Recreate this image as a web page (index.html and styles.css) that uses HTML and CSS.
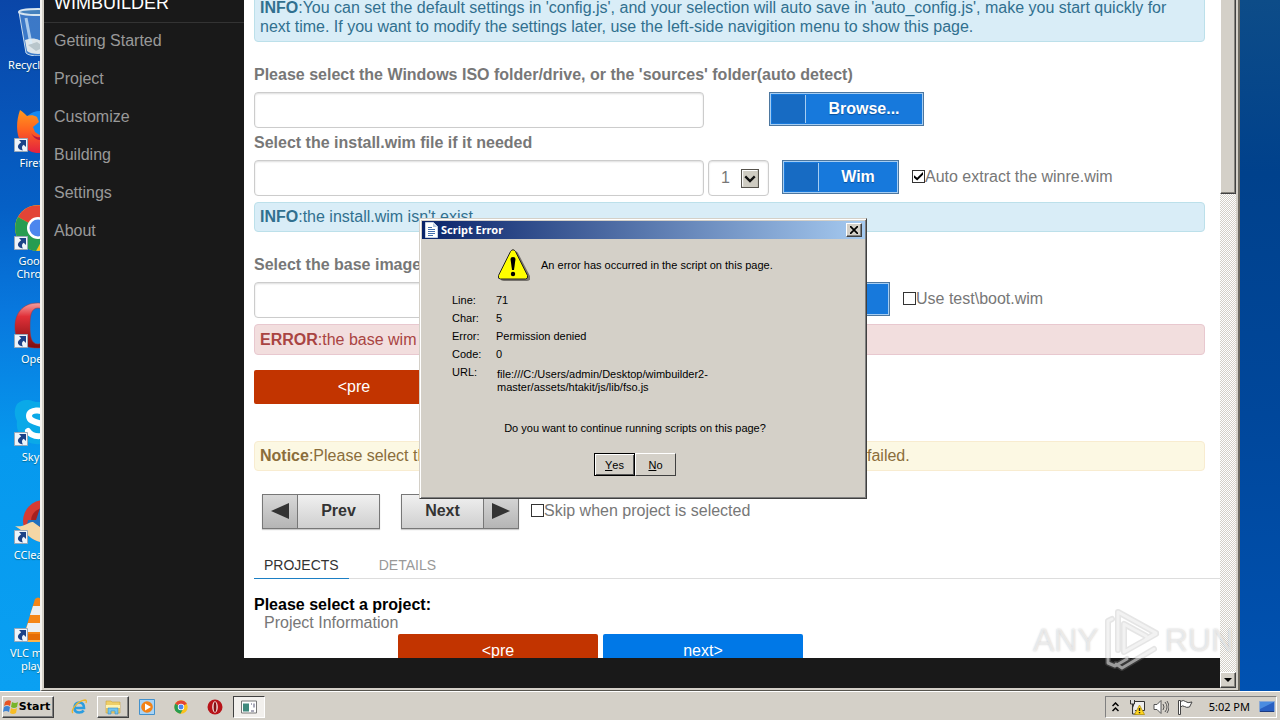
FILE: index.html
```html
<!DOCTYPE html>
<html lang="en">
<head>
<meta charset="utf-8">
<title>WimBuilder</title>
<link rel="stylesheet" href="styles.css">
</head>
<body>
<svg class="defs" aria-hidden="true">
  <defs>
    <linearGradient id="operaRed" x1="0" y1="0" x2="0" y2="1"><stop offset="0" stop-color="#f4a0a0"/><stop offset=".3" stop-color="#e03038"/><stop offset="1" stop-color="#7c0d10"/></linearGradient>
    <linearGradient id="foxOrange" x1="0" y1="0" x2="0" y2="1"><stop offset="0" stop-color="#ff9a1e"/><stop offset=".45" stop-color="#ff6420"/><stop offset="1" stop-color="#e3213f"/></linearGradient>
    <symbol id="shortcut" viewBox="0 0 14 14"><path fill="#eef4fa" stroke="#9aa8b8" d="M.5.5h13v13H.5z"/><path fill="#1b4288" d="M5 2h7v7L9.700 6.700C7.800 8 7.500 9.500 8.800 12.500 4 12 1.500 8 7.200 4.300z"/></symbol>
    <symbol id="chrome" viewBox="0 0 48 48"><circle cx="24" cy="24" r="23" fill="#fbc21c"/><path fill="#e24436" d="M24 24 4 13a23 23 0 0 1 40 0z"/><path fill="#279c51" d="M4 13a23 23 0 0 0 18 34l10-18-8-5z"/><circle cx="24" cy="24" r="11" fill="#fff"/><circle cx="24" cy="24" r="8.500" fill="#4c86ee"/></symbol>
  </defs>
</svg>

<main class="desktop">
  <ul class="shortcuts">
    <li><span class="pic"><svg viewBox="0 0 48 48"><path fill="#7cb4e8" fill-opacity=".45" stroke="#c8dced" d="m5 4 7 41c4 4 20 4 24 0l7-41z"/><path fill="#dfe6ea" d="m11 32 2 11c4 4 18 4 22 0l2-11c-5-4-8 2-12 0s-9-2-14 0z"/><path fill="#b9c6cc" d="m14 37 9-3 7 5-8 4z"/><ellipse cx="24" cy="4" rx="19" ry="3" fill="#4581bd" stroke="#d7e5f0" stroke-width="2"/><path stroke="#d9ecfb" stroke-opacity=".7" stroke-width="3" d="m12 10 5 26"/></svg></span>Recycle Bin</li>
    <li><span class="pic"><svg viewBox="0 0 48 48"><circle cx="26" cy="23" r="18" fill="#1688ef"/><path fill="url(#foxOrange)" d="M6 4c3 2 5 4 7 6 3-1 7-1 10 1l2 5-6 5 2 5 6 4 9-4c0 7-6 9-11 7 10 9 22-3 18-18 8 15-1 32-18 32C7 47-2 27 6 4z"/><path fill="#b51640" d="M16 24c2 8 10 9 17 5-2 7-13 8-17-5z"/></svg><svg class="mark"><use href="#shortcut"/></svg></span>Firefox</li>
    <li><span class="pic"><svg><use href="#chrome"/></svg><svg class="mark"><use href="#shortcut"/></svg></span>Google Chrome</li>
    <li><span class="pic"><svg viewBox="0 0 48 48"><path fill="url(#operaRed)" stroke="#a33" stroke-width=".5" fill-rule="evenodd" d="M24 1C8 1 1 12 1 25s6 21 23 21 23-8 23-21S40 1 24 1zm0 5c7 0 8 8 8 18s-1 18-8 18-8-8-8-18 1-18 8-18z"/></svg><svg class="mark"><use href="#shortcut"/></svg></span>Opera</li>
    <li><span class="pic"><svg viewBox="0 0 48 48"><path fill="#0aa9e8" d="M3 4c8-7 15-3 19-2 16-1 27 12 24 27 3 14-9 20-19 15C12 46 1 34 3 21c-3-6-3-12 0-17z"/><path fill="none" stroke="#fff" stroke-width="6" stroke-linecap="round" d="M33 14c-5-5-18-5-18 2 0 9 19 5 19 14 0 8-16 8-20 1"/></svg><svg class="mark"><use href="#shortcut"/></svg></span>Skype</li>
    <li><span class="pic"><svg viewBox="0 0 48 48"><circle cx="30" cy="23" r="21" fill="#d63b32"/><circle cx="30" cy="23" r="13" fill="#a61f1f"/><path fill="#2070be" d="m14 22 8 0 5-15 10 5-8 17-16-3z"/><path fill="#f4d6a5" d="M1 28c9 2 14-5 18-4l14 10-7 10c-9-2-12-8-25-16z"/></svg><svg class="mark"><use href="#shortcut"/></svg></span>CCleaner</li>
    <li><span class="pic"><svg viewBox="0 0 48 48"><path fill="#f58616" d="M21 3q3-3 6 0l13 42H8z"/><path fill="#eceff1" d="m19 10-3 9h16l-3-9zm-5 17-3 9h26l-3-9z"/><path fill="#e56d06" d="M6 38h36l4 8H2z"/><path fill="#ffb347" d="M3 44h42v2H3z"/></svg><svg class="mark"><use href="#shortcut"/></svg></span>VLC media player</li>
  </ul>

  <section class="window">
    <div class="view">
      <nav class="side">
        <h1>WIMBUILDER</h1>
        <ul>
          <li><a href="#start">Getting Started</a></li>
          <li><a href="#project">Project</a></li>
          <li><a href="#customize">Customize</a></li>
          <li><a href="#building">Building</a></li>
          <li><a href="#settings">Settings</a></li>
          <li><a href="#about">About</a></li>
        </ul>
      </nav>
      <div class="page">
        <p class="alert info first"><b>INFO</b>:You can set the default settings in 'config.js', and your selection will auto save in 'auto_config.js', make you start quickly for next time. If you want to modify the settings later, use the left-side navigition menu to show this page.</p>

        <label class="title lead" for="iso">Please select the Windows ISO folder/drive, or the 'sources' folder(auto detect)</label>
        <div class="row">
          <input class="field" id="iso" type="text">
          <button class="blue browse" type="button"><span class="cap"></span><span class="txt">Browse...</span></button>
        </div>
        <label class="title" for="wim">Select the install.wim file if it needed</label>
        <div class="row">
          <input class="field" id="wim" type="text">
          <span class="pick"><select aria-label="Image index"><option>1</option></select><svg viewBox="0 0 17 18"><path fill="#cfccc2" stroke="#55524c" d="M.5.5h16v17H.5z"/><path fill="none" stroke="#fff" d="M1.500 16.500v-15h14"/><path fill="none" stroke="#111" stroke-width="2.200" d="m4 7 4.500 4.500L13 7"/></svg></span>
          <button class="blue" type="button"><span class="cap"></span><span class="txt">Wim</span></button>
          <label class="check"><input type="checkbox" checked>Auto extract the winre.wim</label>
        </div>
        <p class="alert info slim"><b>INFO</b>:the install.wim isn't exist.</p>

        <label class="title base" for="base">Select the base image</label>
        <div class="row">
          <input class="field" id="base" type="text">
          <button class="blue boot" type="button"><span class="cap"></span><span class="txt"></span></button>
          <label class="check"><input type="checkbox">Use test\boot.wim</label>
        </div>
        <p class="alert error"><b>ERROR</b>:the base wim</p>
        <button class="flat red" type="button">&lt;pre</button>
        <p class="alert notice slim"><span class="start"><b>Notice</b>:Please select the</span><span>failed.</span></p>

        <div class="pager">
          <button class="grey" type="button"><span class="cap"><svg viewBox="0 0 18 16"><path fill="#333" d="M18 0v16L0 8z"/></svg></span><span class="txt">Prev</span></button>
          <button class="grey" type="button"><span class="txt">Next</span><span class="cap end"><svg viewBox="0 0 18 16"><path fill="#333" d="M0 0v16l18-8z"/></svg></span></button>
          <label class="check"><input type="checkbox">Skip when project is selected</label>
        </div>

        <div class="tabs"><a class="on" href="#projects">PROJECTS</a><a href="#details">DETAILS</a></div>
        <h2>Please select a project:</h2>
        <p class="about">Project Information</p>
        <div class="steps">
          <button class="flat red" type="button">&lt;pre</button>
          <button class="flat next" type="button">next&gt;</button>
        </div>
      </div>
    </div>
    <div class="scroll"><div class="thumb"></div><button type="button" aria-label="Scroll down"><svg viewBox="0 0 8 4"><path d="M0 0h8L4 4z"/></svg></button></div>
  </section>

  <section class="dialog" role="dialog" aria-label="Script Error">
    <header>
      <svg class="doc" viewBox="0 0 13 16"><path fill="#fff" stroke="#c6d4e6" d="M.5.5h8l4 4v11H.5z"/><path fill="#b5c8df" d="M8 1v4h4z"/><path stroke="#4470ad" d="M3 5.500h4M3 7.500h7M3 9.500h7M3 11.500h7M3 13.500h5"/></svg>
      <span>Script Error</span>
      <button type="button" aria-label="Close"><svg viewBox="0 0 8 8"><path stroke="#000" stroke-width="1.700" d="m0 0 8 8M8 0 0 8"/></svg></button>
    </header>
    <div class="body">
      <p class="message"><svg viewBox="0 0 32 32"><path fill="#77736e" d="M16 3q2-2 4 1l12 23q1 5-3 5H6q-4 0-3-3z"/><path fill="#ff0" stroke="#222" d="M12.500 2.500q2.500-3.500 5 0l12 24q1 3-2 3.500H2.500q-3 0-2-3.500z"/><path d="M12.500 10q0-2 2.500-2t2.500 2l-1.500 11h-2z"/><circle cx="15" cy="25" r="2.200"/></svg>An error has occurred in the script on this page.</p>
      <dl>
        <dt>Line:</dt><dd>71</dd>
        <dt>Char:</dt><dd>5</dd>
        <dt>Error:</dt><dd>Permission denied</dd>
        <dt>Code:</dt><dd>0</dd>
        <dt>URL:</dt><dd class="url">file:///C:/Users/admin/Desktop/wimbuilder2-<br>master/assets/htakit/js/lib/fso.js</dd>
      </dl>
      <p class="ask">Do you want to continue running scripts on this page?</p>
      <div class="answers"><button class="default" type="button"><u>Y</u>es</button><button type="button"><u>N</u>o</button></div>
    </div>
  </section>

  <div class="brand"><span>ANY</span><svg viewBox="0 0 56 64"><g fill="none" stroke="#999" stroke-opacity=".25" stroke-width="6" stroke-linejoin="round" stroke-linecap="round"><path id="play" d="M14 42V4l38 21-10 6M20 16v28l32-18M20 16l22 12M8 11 4 13v42l7 3 12-7M12 56l6 4 32-19"/></g><g fill="none" stroke="#fff" stroke-opacity=".5" stroke-width="3" stroke-linejoin="round" stroke-linecap="round"><use href="#play"/></g></svg><span>RUN</span></div>
</main>

<footer class="taskbar">
  <button class="start" type="button"><svg viewBox="0 0 16 16"><path fill="#e75324" d="M2 3q3-3 6-1L7 7Q4 5 1 7z"/><path fill="#78b52b" d="M9 3q3 2 6 0l-1 5q-3 2-6 0z"/><path fill="#3d83d4" d="M1 8q3-2 6 0l-1 5Q3 11 0 13z"/><path fill="#f7bd25" d="M8 9q3 2 6 0l-1 5q-3 2-6 0z"/></svg>Start</button>
  <div class="apps">
    <button type="button" aria-label="Internet Explorer"><svg viewBox="0 0 16 16"><path fill="none" stroke="#2b9de0" stroke-width="2.600" d="M3.500 9H13Q13 3.500 8.300 3.500T3.500 9q0 4.500 4.800 4.500 3 0 4.400-2"/><path fill="none" stroke="#edb52b" stroke-width="1.300" d="M2 14C-1 12 6 2 14 1q2 0 1 3"/></svg></button>
    <button class="raised" type="button" aria-label="Explorer"><svg viewBox="0 0 16 16"><path fill="#efcf68" stroke="#c9a23d" stroke-width=".6" d="M1 2h5l1 1h8v11H1z"/><path fill="#fff3b0" d="M1 6h14v3H1z"/><path fill="#72c4ee" stroke="#3a8fc4" stroke-width=".6" d="M3 15V9h10v6h-3v-3H6v3z"/></svg></button>
    <button type="button" aria-label="Media Player"><svg viewBox="0 0 16 16"><path fill="#a8d3f5" stroke="#4391cc" d="M.5.5h15v15H.5z"/><circle cx="8" cy="8" r="5.800" fill="#f38216"/><path fill="#fff" d="m6 4.500 6 3.500-6 3.500z"/></svg></button>
    <button type="button" aria-label="Chrome"><svg class="small"><use href="#chrome"/></svg></button>
    <button type="button" aria-label="Opera"><svg viewBox="0 0 16 16"><circle cx="8" cy="8" r="7.500" fill="#b81319"/><ellipse cx="8" cy="8" rx="2.800" ry="5.700" fill="#f5e3e0"/><ellipse cx="8" cy="8" rx="1.400" ry="5" fill="#851114"/></svg></button>
    <button class="active" type="button" aria-label="WimBuilder"><svg viewBox="0 0 16 13"><path fill="#fff" stroke="#777" d="M.5.5h15v12H.5z"/><path fill="#3f897d" d="M2 3h6v8H2z"/><path stroke="#557" d="M10 3.500h1M13 3v4M10 10.500h3"/></svg></button>
  </div>
  <div class="tray">
    <svg class="chev" viewBox="0 0 7 10"><path fill="none" stroke="#000" stroke-width="1.500" d="m.5 4 3-3 3 3m-6 5 3-3 3 3"/></svg>
    <svg viewBox="0 0 16 16"><path fill="#eee" stroke="#333" d="M4.500 2.500h11v9h-11z"/><path fill="#ddd" stroke="#333" d="M1.500 1v4h4V1m-2 4v10h4"/><path fill="#ffd51f" stroke="#a88600" stroke-width=".7" d="m10.500 6 5 9.500h-10z"/><path stroke="#222" stroke-width="1.400" d="M10.500 9v3m0 1v1.300"/></svg>
    <svg viewBox="0 0 16 16"><path fill="#fff" stroke="#555" d="M1 5.500h3l4-4v13l-4-4H1z"/><path fill="none" stroke="#555" d="M10 5q2 3 0 6m2-8q4 5 0 10m2-11q4 6 0 12"/></svg>
    <svg viewBox="0 0 16 16"><path fill="#fff" stroke="#444" d="M1.500 15.500v-14h2v14zM3.500 2.500q3-2 5 0t6.500.5l-2.500 5q-3 1-5-.5t-4 .5z"/></svg>
    <time>5:02 PM</time>
    <svg class="screen" viewBox="0 0 16 12"><path fill="#285fc2" stroke="#8aa8d4" d="M.5.5h15v10H.5z"/><path fill="#4a8be0" d="M1 1h14L1 8z"/><path fill="#1b3a80" d="M1 10h14v1H1z"/></svg>
  </div>
</footer>
</body>
</html>
```
FILE: styles.css
```css
* { box-sizing: border-box; }
body {
  margin: 0;
  height: 100vh;
  display: flex;
  flex-direction: column;
  overflow: hidden;
  font: 16px/19px "Liberation Sans", Arial, sans-serif;
  color: #777;
}
button, input, select { font: inherit; color: inherit; margin: 0; padding: 0; }
p, h1, h2, ul, dl, dd { margin: 0; padding: 0; }
ul { list-style: none; }
a { color: inherit; text-decoration: none; }
.defs { position: absolute; width: 0; height: 0; }

/* Desktop */
.desktop {
  position: relative;
  flex: 1;
  min-height: 0;
  background:
    linear-gradient(#0a46a8, #0560c6 30%, #0878de 45%, #0699ee 65%, #0aa0f2) left / 50% 100% no-repeat,
    linear-gradient(#0d4c88, #00418c 25%, #00479b 60%, #0052b2) right / 50% 100% no-repeat;
}
.shortcuts {
  width: 74px;
  display: grid;
  grid-auto-rows: 98px;
  font: 11px/13px "Noto Sans", sans-serif;
  color: #fff;
  text-align: center;
  text-shadow: 0 1px 1px #0448;
}
.shortcuts li { padding: 8px 6px 0; }
.pic { display: block; position: relative; width: 48px; height: 48px; margin: 0 auto 2px 8px; }
.pic svg { display: block; width: 48px; height: 48px; }
.pic .mark { position: absolute; left: 0; bottom: 2px; width: 14px; height: 14px; }

/* Application window */
.window {
  position: absolute;
  inset: 0 40px 0 40px;
  display: flex;
  background: #d4d0c8;
  padding: 0 2px 2px 2px;
  border: solid;
  border-width: 0 2px 1px 2px;
  border-color: #d4d0c8 #6d6a62 #55534d #f4f2ee;
}
.view { flex: 1; min-width: 0; display: flex; background: #191919; overflow: hidden; }
.side { flex: 0 0 200px; color: #999; }
.side h1 {
  height: 23px;
  padding-left: 10px;
  border-bottom: 1px solid #333;
  font-size: 18px;
  font-weight: 400;
  line-height: 6px;
  color: #fff;
}
.side ul { margin-top: -1px; }
.side a { display: block; padding-left: 10px; line-height: 38px; }
.page {
  flex: 1;
  min-width: 0;
  margin-bottom: 30px;
  padding-left: 10px;
  overflow: hidden;
  background: #fff;
}
.alert { margin: 6px 15px 0 0; padding: 5px; border: 1px solid; border-radius: 4px; }
.alert.first { margin-top: -8px; }
.alert.slim { padding-top: 4px; }
.info { color: #31708f; background: #d9edf7; border-color: #bce0ea; }
.error { color: #a94442; background: #f2dede; border-color: #e8c8cf; }
.notice { display: flex; color: #8a6d3b; background: #fcf8e3; border-color: #f8ecd0; margin-top: 37px; }
.notice .start { flex: 0 0 607px; }
.title { display: block; margin-top: 6px; line-height: 18px; font-weight: 700; }
.title.lead { margin-top: 24px; }
.title.base { margin-top: 24px; }
.row { display: flex; height: 36px; margin-top: 8px; }
.field {
  width: 450px;
  height: 36px;
  padding: 0 10px;
  border: 1px solid #ccc;
  border-radius: 4px;
  background: #fff;
  box-shadow: inset 0 1px 2px #ddd;
}
.pick { position: relative; margin-left: 4px; }
.pick select {
  appearance: none;
  width: 61px;
  height: 36px;
  padding: 0 0 1px 12px;
  border: 1px solid #ccc;
  border-radius: 4px;
  background: #fff;
  box-shadow: inset 0 1px 2px #ddd;
}
.pick svg { position: absolute; right: 10px; top: 9px; width: 18px; height: 19px; pointer-events: none; }
.blue, .grey { display: flex; align-items: stretch; height: 34px; font-weight: 700; }
.blue {
  width: 117px;
  margin-left: 13px;
  padding: 1px;
  border: 1px solid #4d779f;
  background: #1779dc;
  box-shadow: inset 0 0 0 1px #a6cdf2;
  color: #fff;
  text-shadow: 0 1px 1px #0a4f9b;
}
.blue .cap { flex: 0 0 34px; background: #176bc3; border-right: 1px solid #a6cdf2; margin: 1px 0 1px 1px; }
.browse { width: 155px; margin-left: 65px; }
.boot { margin-left: 69px; }
.txt { flex: 1; align-self: center; padding-bottom: 2px; text-align: center; }
.check { display: flex; align-items: center; margin-left: 13px; height: 32px; }
.check input {
  appearance: none;
  position: relative;
  width: 13px;
  height: 13px;
  border: 1px solid #333;
  background: #fff;
}
.check input:checked::after {
  content: "";
  position: absolute;
  inset: 1px;
  background: #000;
  clip-path: polygon(0 42%, 35% 70%, 100% 5%, 100% 35%, 35% 100%, 0 70%);
}
.flat { display: block; width: 200px; height: 34px; padding-bottom: 2px; border: 0; border-radius: 2px; color: #fff; }
.red { background: #c23400; }
.next { background: #0078e7; }
.page > .flat { margin-top: 15px; }
.pager { display: flex; margin: 23px 0 0 8px; height: 35px; }
.grey {
  width: 118px;
  height: 35px;
  margin-right: 21px;
  border: 1px solid #777;
  background: linear-gradient(#f0f0f0, #cfcfcf);
  box-shadow: 0 1px 1px #ccc;
  color: #333;
}
.grey .cap { flex: 0 0 35px; display: grid; place-items: center; padding-bottom: 1px; background: linear-gradient(#d8d8d8, #b5b5b5); border-right: 1px solid #777; }
.grey .end { border: 0; border-left: 1px solid #777; }
.grey svg { width: 18px; height: 16px; }
.pager .check { margin-left: -9px; }
.tabs { display: flex; gap: 20px; height: 27px; margin-top: 23px; border-bottom: 1px solid #ddd; font-size: 14px; line-height: 26px; color: #999; }
.tabs a { padding: 0 10px; height: 27px; }
.tabs .on { color: #333; border-bottom: 1px solid #1b7fc4; }
h2 { margin-top: 17px; font-size: 16px; line-height: 18px; color: #000; }
.about { padding-left: 10px; line-height: 18px; }
.steps { display: flex; gap: 5px; margin: 2px 0 0 144px; }
.scroll {
  flex: 0 0 16px;
  display: flex;
  flex-direction: column;
  justify-content: space-between;
  background: repeating-conic-gradient(#d4d0c8 0 25%, #fff 0 50%) 0 0 / 2px 2px;
}
.thumb, .scroll button { background: #d4d0c8; border: 1px solid; border-color: #fff #404040 #404040 #fff; box-shadow: inset -1px -1px #87847d; }
.thumb { height: 194px; border-top: 0; }
.scroll button { height: 16px; display: grid; place-items: center; }
.scroll svg { width: 8px; height: 4px; }

/* Script error dialog */
.dialog {
  position: absolute;
  left: 419px;
  top: 218px;
  width: 448px;
  height: 281px;
  padding: 2px 1px 1px 2px;
  border: 1px solid;
  border-color: #d4d0c8 #404040 #404040 #d4d0c8;
  box-shadow: inset 1px 1px #fff, inset -1px -1px #808080;
  background: #d4d0c8;
  color: #000;
  font-size: 11px;
  line-height: 18px;
}
.dialog header {
  display: flex;
  align-items: center;
  height: 18px;
  padding: 0 3px;
  background: linear-gradient(90deg, #0a246a, #a6caf0);
  color: #fff;
  font: 700 11px/18px "Noto Sans", sans-serif;
}
.dialog header span { flex: 1; }
.doc { width: 13px; height: 16px; margin-right: 3px; }
.dialog button {
  display: flex;
  align-items: center;
  justify-content: center;
  background: #d4d0c8;
  border: 1px solid;
  border-color: #fff #404040 #404040 #fff;
}
.dialog header button { width: 16px; height: 14px; box-shadow: inset -1px -1px #808080; }
.dialog header button svg { width: 8px; height: 8px; }
.message { display: flex; align-items: center; margin: 10px 0 0 76px; height: 32px; }
.message svg { width: 32px; height: 32px; margin-right: 11px; }
.dialog dl { display: grid; grid-template-columns: 44px 1fr; margin: 10px 0 0 30px; }
.url { line-height: 13px; padding: 5px 0 0 1px; }
.ask { margin: 25px 17px 0 0; text-align: center; }
.answers { display: flex; justify-content: center; margin: 16px 17px 0 0; }
.answers button { width: 41px; height: 23px; padding-top: 1px; }
.answers .default { border-color: #000; box-shadow: inset 1px 1px #fff, inset -1px -1px #555; }

/* Corner watermark */
.brand {
  position: absolute;
  right: 46px;
  bottom: 19px;
  display: flex;
  align-items: center;
  gap: 5px;
  font: 32px/64px "Liberation Sans", Arial, sans-serif;
  color: #fff8;
  text-shadow: 0 0 2px #8887;
  pointer-events: none;
}
.brand svg { width: 56px; height: 64px; }

/* Taskbar */
.taskbar {
  flex: 0 0 29px;
  display: flex;
  align-items: center;
  padding: 2px 3px 0 2px;
  background: #d4d0c8;
  border-top: 1px solid #fff;
  font: 11px/14px "Noto Sans", sans-serif;
  color: #000;
}
.taskbar button { height: 22px; border: 1px solid transparent; background: none; display: flex; align-items: center; justify-content: center; }
.taskbar .start, .taskbar .raised { border-color: #fff #404040 #404040 #fff; box-shadow: inset -1px -1px #808080; }
.taskbar .start { width: 52px; padding-right: 3px; font: 700 11px/14px "DejaVu Sans", sans-serif; }
.taskbar svg { width: 16px; height: 16px; flex: none; }
.taskbar .small { width: 14px; height: 14px; }
.apps { display: flex; flex: 1; gap: 2px; margin-left: 9px; }
.apps button { width: 32px; }
.taskbar .active { border-color: #404040 #fff #fff #404040; background: #f2f0ed; }
.tray { display: flex; align-items: center; gap: 8px; height: 22px; padding: 0 1px 0 6px; border: 1px solid; border-color: #808080 #fff #fff #808080; }
.taskbar .chev { width: 7px; height: 10px; margin-right: 2px; }
.tray time { margin: 0 1px 0 8px; }
.taskbar .screen { height: 12px; }
```
